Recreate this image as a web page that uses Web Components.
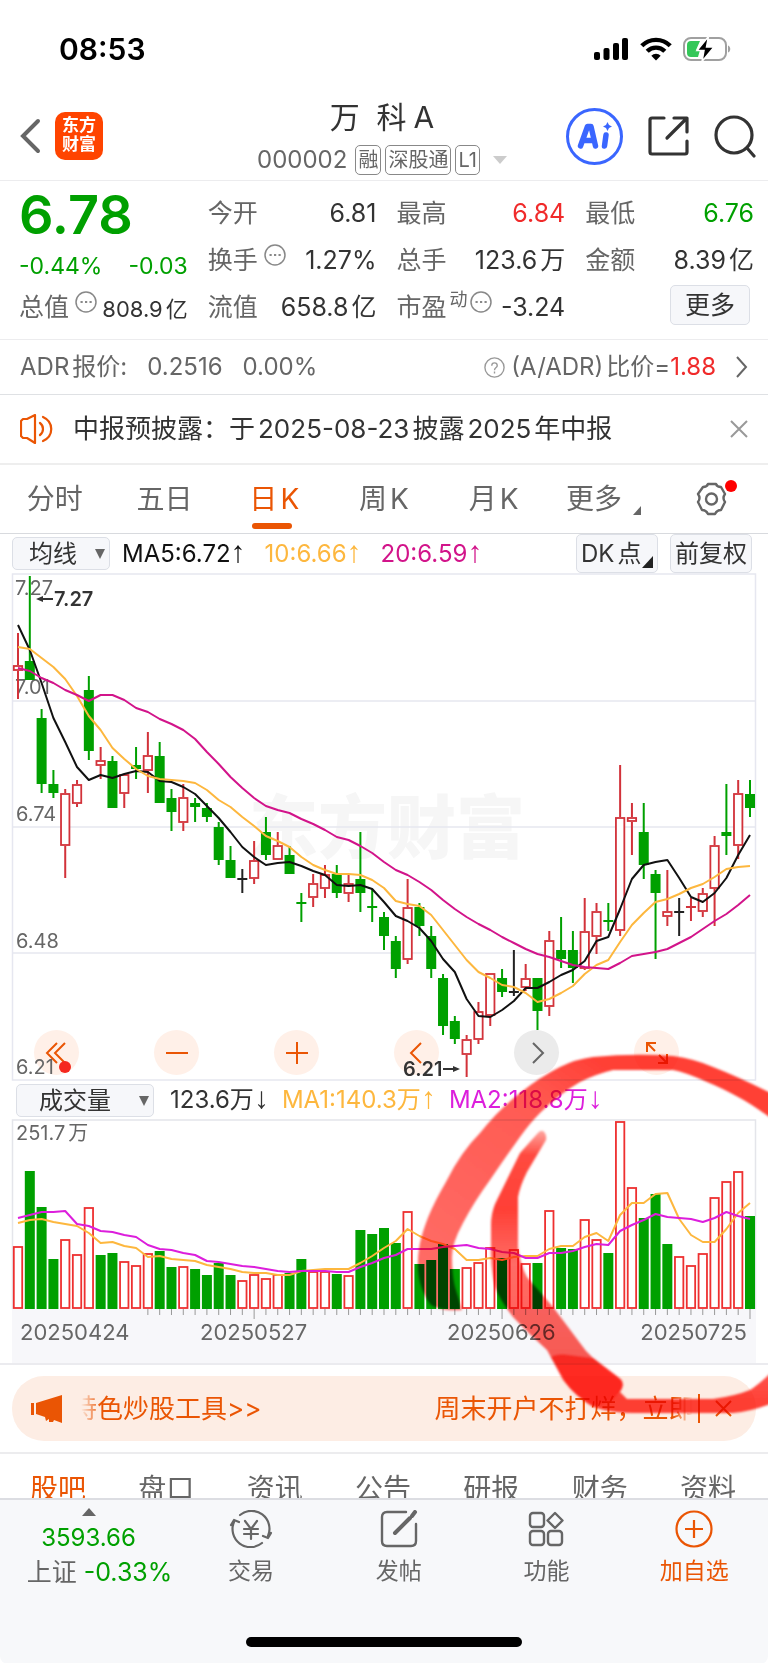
<!DOCTYPE html>
<html lang="zh-CN">
<head>
<meta charset="utf-8">
<meta name="viewport" content="width=device-width, initial-scale=1">
<title>万科A 000002</title>
<style>
body{margin:0;background:#fff;color:#333;font-family:Inter,"Noto Sans CJK SC",sans-serif;font-size:24px;line-height:32px;
--green:#00a000;--red:#f02a2a;--brand:#ea5504;--muted:#666;--line:#ececee;--panel:#f7f8fa}
</style>
</head>
<body>
<stock-app></stock-app>
<script>
/* .g separates Latin digits and letters from the Chinese characters beside them. */
const RESET = `*{box-sizing:border-box}:host{display:block}svg{display:block;flex:none}
button,select,a{font:inherit;color:inherit;text-decoration:none;border:0;background:none;padding:0;margin:0}
button,a{display:block}.g{margin-left:3px}`;
function define(name, css, html, ready) {
  const t = document.createElement('template');
  t.innerHTML = `<style>${RESET}${css}</style>${html}`;
  customElements.define(name, class extends HTMLElement {
    constructor() { super(); this.attachShadow({ mode: 'open' }).append(t.content.cloneNode(true)); }
    connectedCallback() { if (ready) ready(this, this.shadowRoot); }
  });
}

define('status-bar', `
:host{display:flex;align-items:center;justify-content:space-between;height:96px;padding:2px 36px 0 59px;color:#000}
time{font-size:30px;font-weight:600}
.i{display:flex;align-items:center;gap:11px}`, `
<time>08:53</time>
<div class="i">
<svg width="35" height="24"><g><rect x="0" y="15" width="6" height="8" rx="2"/><rect x="9.500" y="11" width="6" height="12" rx="2"/><rect x="19" y="6" width="6" height="17" rx="2"/><rect x="28" y="1" width="6" height="22" rx="2"/></g></svg>
<svg width="32" height="24" viewBox="0 0 32 24" fill="none" stroke="#000" stroke-width="4.400"><path d="M1.800 8.800a20 20 0 0 1 28.400 0"/><path d="M7.200 14.300a12.400 12.400 0 0 1 17.600 0"/><path d="M16 23.500l-4.700-4.800a6.700 6.700 0 0 1 9.400 0z" fill="#000" stroke="none"/></svg>
<svg width="49" height="26" viewBox="0 0 49 26"><rect x="1" y="2" width="42" height="22" rx="7" fill="none" stroke="#a0a0a0" stroke-width="2"/><path d="M8 5h9l-4 9h4l-2 7H8a4 4 0 0 1-4-4V9a4 4 0 0 1 4-4z" fill="#34c759"/><path d="M45 9.500c3 1 3 6 0 7z" fill="#a0a0a0"/><path d="M25.500.500L14 14.500h7L19 25.500 31 11h-7.500z" stroke="#fff" stroke-width="1.500"/></svg>
</div>`);

define('stock-header', `
:host{display:grid;grid-template-columns:1fr auto 1fr;align-items:center;height:85px;padding:0 12px 4px;border-bottom:1px solid var(--line)}
.l,.r,.s{display:flex;align-items:center}.l{gap:14px;padding-left:8px}
.r{justify-content:flex-end;gap:25px}
.logo{width:48px;height:48px;border-radius:10px;background:#ff4400;color:#fff;font-weight:700;font-size:17px;line-height:19px;text-align:center;padding:4px 6px}
.c{text-align:center;margin-right:4px}
h1{font-size:30px;line-height:38px;font-weight:400;margin:0;white-space:pre}
h1 b{font-weight:400;padding-left:7px}
.s{color:var(--muted);gap:4px;line-height:30px;margin-top:9px}
.s i{font-style:normal;font-size:20px;line-height:28px;border:1px solid #888;border-radius:5px;padding:0 2px}
.s span{padding-right:4px}.s svg{margin-left:9px}
.ai{display:grid;place-items:center;width:57px;height:57px;border:3px solid #3a66ff;border-radius:50%}`, `
<div class="l"><button aria-label="返回"><svg width="21" height="36" fill="none" stroke="#666" stroke-width="4" stroke-linecap="round"><path d="M18 3L3 18l15 15"/></svg></button><div class="logo">东方<br>财富</div></div>
<div class="c"><h1>万  科<b>A</b></h1><div class="s"><span>000002</span><i>融</i><i>深股通</i><i>L1</i><svg width="14" height="8"><path d="M0 0h14l-7 8z" fill="#ccc"/></svg></div></div>
<div class="r"><button class="ai" aria-label="AI"><svg width="36" height="30" viewBox="0 0 36 30" fill="none" stroke="#3a66ff" stroke-linejoin="round" stroke-linecap="round"><path d="M3.500 25L10.500 5.500h3.500L18.500 25M8 19.500h8" stroke-width="5.500"/><path d="M29 14l-1.500 11" stroke-width="5.500"/><path d="M30.500 1l1.500 3 3 1.500-3 1.500-1.500 3-1.500-3-3-1.500 3-1.500z" fill="#3a66ff" stroke="none"/></svg></button>
<button aria-label="分享"><svg width="41" height="42" fill="none" stroke="#333" stroke-width="3.200" stroke-linecap="round" stroke-linejoin="round"><path d="M16 3H4q-2 0-2 2v32q0 2 2 2h33q2 0 2-2V26M19 23L38 4M26 3h13v14"/></svg></button>
<button aria-label="搜索"><svg width="42" height="43" fill="none" stroke="#333" stroke-width="3.200" stroke-linecap="round"><circle cx="20" cy="20" r="18"/><path d="M33 33l7 8"/></svg></button></div>`);

define('quote-cell', `
:host{display:flex;justify-content:space-between;align-items:center;white-space:nowrap;color:#333;min-width:0}
.k{display:flex;align-items:center;color:var(--muted);font-size:25px}
.v{font-size:25px}
sup{font-size:18px;line-height:18px;align-self:flex-start;margin-left:3px}
svg{align-self:flex-start;margin-left:6px}sup+svg{margin-left:2px}
:host([tone=red]){color:var(--red)}:host([tone=green]){color:var(--green)}
:host([small]) .v{font-size:22px;padding-top:4px}
::slotted(b){font-weight:400;margin-left:3px}`, `<span class="k"></span><span class="v"><slot></slot></span>`, (el, root) => {
  const info = '<svg width="22" height="22" fill="none" stroke="#888" stroke-width="1.500"><circle cx="11" cy="11" r="10"/><path d="M5.500 11h2.200M10 11h2.200M14.500 11h2.200" stroke-width="2.200"/></svg>';
  root.querySelector('.k').innerHTML = el.getAttribute('label') + (el.hasAttribute('sup') ? `<sup>${el.getAttribute('sup')}</sup>` : '') + (el.hasAttribute('info') ? info : '');
});

define('quote-panel', `
:host{display:grid;grid-template-columns:repeat(4,minmax(0,1fr));grid-auto-rows:47px;column-gap:20px;padding:8px 14px 9px 19px;border-bottom:1px solid var(--line)}
:host>*{align-self:center}
.p{color:var(--green);font-size:54px;font-weight:600;line-height:54px;padding-top:5px}
.d{display:flex;justify-content:space-between;color:var(--green);padding-top:12px;font-size:23px}
button{justify-self:end;width:80px;height:40px;margin:0 4px 4px 0;border:1px solid #dcdfe6;border-radius:5px;background:#f6f7fa;font-size:25px}`, `
<div class="p">6.78</div><quote-cell label="今开">6.81</quote-cell><quote-cell label="最高" tone="red">6.84</quote-cell><quote-cell label="最低" tone="green">6.76</quote-cell>
<div class="d"><span>-0.44%</span><span>-0.03</span></div><quote-cell label="换手" info>1.27%</quote-cell><quote-cell label="总手">123.6<b>万</b></quote-cell><quote-cell label="金额">8.39<b>亿</b></quote-cell>
<quote-cell label="总值" info small>808.9<b>亿</b></quote-cell><quote-cell label="流值">658.8<b>亿</b></quote-cell><quote-cell label="市盈" sup="动" info>-3.24</quote-cell><button>更多</button>`);

define('adr-row', `
:host{display:flex;align-items:center;justify-content:space-between;height:55px;padding:0 20px;border-bottom:1px solid #dfe1e4;color:var(--muted)}
div,a{display:flex;align-items:center}div{gap:20px}b{font-weight:400;color:var(--red)}
a svg:first-child{margin-right:6px}a svg:last-child{margin-left:20px}`, `
<div><span>ADR<span class="g">报价:</span></span><span>0.2516</span><span>0.00%</span></div>
<a href="#adr"><svg width="21" height="23" viewBox="0 0 23 23" fill="none" stroke="#999" stroke-width="1.500"><circle cx="11.500" cy="11.500" r="10.500"/><path d="M8.500 9.500c0-4 6-4 6 0 0 2-3 2-3 5M11.500 16v2"/></svg>(A/ADR)<span class="g">比价=</span><b>1.88</b><svg width="12" height="22" fill="none" stroke="#666" stroke-width="2"><path d="M1 1l9 10-9 10"/></svg></a>`);

define('notice-bar', `
:host{display:flex;align-items:center;height:70px;padding:0 20px;border-bottom:2px solid #eee;font-size:26px}
p{flex:1;margin:0 0 0 20px;white-space:nowrap}`, `
<svg width="33" height="30" fill="none" stroke="#ea5504" stroke-width="2.200" stroke-linejoin="round" stroke-linecap="round"><path d="M1 7l2-2h4l8-4v28l-8-5H3l-2-2zM20 9c4 3 4 9 0 12M23 3c11 5 11 19 0 24"/></svg>
<p>中报预披露：于<span class="g">2025-08-23</span><span class="g">披露</span><span class="g">2025</span><span class="g">年中报</span></p>
<button aria-label="关闭"><svg width="18" height="18" stroke="#999" stroke-width="2"><path d="M1 1l16 16M17 1L1 17"/></svg></button>`);

define('period-tabs', `
:host{display:grid;grid-template-columns:repeat(7,1fr);align-items:center;justify-items:center;height:69px;border-bottom:1px solid #d8dade;font-size:28px;color:var(--muted)}
a,button{position:relative;white-space:nowrap}
.on{color:var(--brand)}
.on::after{content:"";position:absolute;left:3px;bottom:-14px;width:40px;height:6px;border-radius:3px;background:var(--brand)}
.m{display:flex;align-items:flex-end;gap:11px}`, `
<a href="#fs">分时</a><a href="#d5">五日</a><a href="#dk" class="on">日<span class="g">K</span></a><a href="#wk">周<span class="g">K</span></a><a href="#mk">月<span class="g">K</span></a>
<button class="m">更多<svg width="8" height="9"><path d="M8 0v9H0z" fill="#666"/></svg></button>
<button aria-label="设置"><svg width="48" height="40" viewBox="-2 0 48 40"><g fill="none" stroke="#666" stroke-width="2.400" stroke-linejoin="round"><path d="M12 8q4 0 5-3h8q1 3 5 3l4 7q-3 4 0 8l-4 8q-4 0-6 4h-7q-2-4-6-4l-4-8q3-4 0-8z"/><circle cx="20.500" cy="20" r="5.500"/></g><circle cx="40" cy="7" r="6" fill="#f00"/></svg></button>`);

define('indicator-select', `
:host{display:block;position:relative;width:var(--w)}
select{appearance:none;display:block;width:100%;height:33px;padding-left:var(--pad);border:1px solid #dcdfe6;border-radius:5px;background:#f6f7fa;color:#333;line-height:31px;font-size:24px}
svg{position:absolute;right:5px;top:12px;pointer-events:none}`, `<select></select><svg width="10" height="10"><path d="M0 0h10L5 10z" fill="#666"/></svg>`, (el, root) => {
  const s = root.querySelector('select');
  s.setAttribute('aria-label', el.getAttribute('label'));
  s.innerHTML = `<option>${el.getAttribute('label')}</option>`;
});

const ARROW = 'u{font-family:"Liberation Sans",Inter,sans-serif;text-decoration:none;font-size:30px;line-height:24px}span{white-space:nowrap}';
define('average-bar', `${ARROW}
:host{display:flex;align-items:center;height:39px;padding:0 16px 0 12px}
indicator-select{--w:98px;--pad:16px;margin-right:12px}
.v{display:flex;gap:19px;flex:1}
button{height:39px;border:1px solid #dcdfe6;border-radius:5px;background:#f6f7fa;margin-left:12px;padding:0 4px;position:relative;white-space:nowrap}
.dk{width:82px;text-align:left}.dk svg{position:absolute;right:4px;bottom:4px}`, `
<indicator-select label="均线"></indicator-select>
<div class="v"><span style="color:#111">MA5:6.72<u>↑</u></span><span style="color:#fdb73e">10:6.66<u>↑</u></span><span style="color:#d2148a">20:6.59<u>↑</u></span></div>
<button class="dk">DK<span class="g">点</span><svg width="11" height="12"><path d="M11 0v12H0z" fill="#222"/></svg></button><button>前复权</button>`);

define('volume-bar', `${ARROW}
:host{display:flex;align-items:center;gap:13px;height:38px;padding:0 16px}
indicator-select{--w:138px;--pad:22px;margin-right:3px}`, `
<indicator-select label="成交量"></indicator-select>
<span>123.6万<u>↓</u></span><span style="color:#fdb73e">MA1:140.3万<u>↑</u></span><span style="color:#dc1edc">MA2:118.8万<u>↓</u></span>`);

/* One row per session: high, body top, body bottom, low, colour (r up, g down, k flat), volume bar top. */
const DATA = `633 665 671 699 r 1246|576 661 680 680 g 1171|709 718 784 793 g 1207|770 784 793 798 g 1259|789 793 846 878 r 1239|780 784 804 807 r 1254|676 690 751 760 g 1207r|747 760 766 779 r 1255g|756 761 808 808 g 1253|774 774 794 808 r 1261|747 765 769 779 g 1265r|732 755 771 793 r 1253|742 756 803 803 g 1251|789 798 812 831 g 1267|784 797 823 831 r 1266|798 803 807 822 g 1269|803 808 817 822 g 1275|822 827 860 865 g 1263|846 860 878 878 g 1275|869 879 879 893 k 1280|841 860 879 884 r 1274|817 832 855 860 g 1278r|832 845 860 860 r 1274|846 855 874 874 g 1273|893 903 903 922 g 1259|874 883 898 907 r 1271|865 874 889 898 r 1271|865 874 893 898 g 1274|874 883 894 902 r 1275|832 879 893 912 g 1230|889 907 907 922 g 1234|912 917 936 950 g 1228|936 941 969 978 g 1243|879 907 960 964 r 1211|903 907 926 936 g 1264|926 936 969 978 g 1260|974 978 1026 1035 g 1244|1016 1021 1039 1044 g 1269|1035 1039 1055 1077 r 1267|1002 1011 1040 1044 r 1262|973 973 1016 1026 r 1247|969 978 992 997 g 1258|950 992 992 996 k 1249|964 978 988 991 r 1263|978 978 1011 1030 g 1263|931 940 1007 1016 r 1210|917 950 959 968 g 1248|931 950 968 983 g 1249|898 931 969 970 r 1219|903 911 937 954 r 1239|903 921 921 931 g 1253|765 817 931 936 r 1121|803 817 822 855 r 1187|803 832 865 879 g 1218|870 874 893 959 g 1194|870 911 917 926 r 1244g|898 912 912 936 k 1256|898 907 907 921 r 1265|888 893 912 917 r 1253|836 845 889 926 r 1197|784 832 836 855 g 1181r|780 793 846 859 r 1171|780 794 808 817 g 1216`.split('|').map(r => r.split(' '));
const MA5 = [625,650,683,718,742,767,780,775,778,774,771,772,781,782,787,794,806,818,832,847,857,865,863,862,866,871,875,885,886,885,889,902,916,921,928,941,959,972,999,1016,1017,1010,1001,988,988,982,975,970,961,941,937,909,879,865,862,860,878,897,902,893,878,855,835];
const MA10 = [647,649,658,667,679,696,716,730,748,759,769,776,779,780,781,783,790,800,807,817,826,836,841,847,857,865,870,874,874,875,880,888,901,904,906,915,930,945,960,972,978,985,987,993,1002,999,993,986,974,965,960,942,925,913,902,899,894,888,884,877,869,867,866];
const MA20 = [668,671,678,683,690,695,701,695,695,700,708,712,719,724,730,739,752,764,777,788,798,806,810,813,819,824,830,837,840,846,853,862,870,875,882,890,900,909,917,924,930,937,943,949,954,957,961,965,967,968,969,963,956,954,952,949,943,937,929,921,914,905,895];
const V1 = [1223,1220,1219,1222,1224,1226,1233,1243,1242,1246,1248,1257,1256,1259,1260,1261,1265,1267,1269,1272,1273,1273,1275,1275,1271,1270,1269,1269,1269,1263,1256,1248,1241,1229,1236,1241,1244,1249,1260,1260,1258,1260,1257,1256,1256,1249,1246,1246,1237,1233,1241,1215,1203,1203,1194,1193,1219,1235,1242,1242,1229,1213,1203];
const V2 = [1218,1215,1212,1212,1211,1224,1226,1231,1232,1235,1237,1245,1249,1250,1253,1255,1261,1262,1264,1266,1267,1269,1271,1272,1271,1271,1271,1272,1272,1267,1263,1258,1255,1249,1249,1249,1247,1246,1245,1248,1249,1252,1253,1258,1258,1253,1253,1251,1247,1244,1245,1231,1225,1220,1214,1217,1218,1219,1222,1218,1212,1216,1219];
const xAt = i => 18 + i * 732 / 62;
const line = (a, c) => `<polyline fill="none" stroke="${c}" stroke-width="2" stroke-linejoin="round" points="${a.map((y, i) => xAt(i).toFixed(1) + ',' + y).join(' ')}"/>`;
const COLORS = { r: '#d2323a', g: '#00a000', k: '#222' };

define('candle-chart', `
:host{display:block;position:relative}
svg.c{width:100%;height:auto;position:relative;pointer-events:none}
svg.bg{width:100%;height:auto;position:absolute;left:0;top:0}
.b{position:absolute;left:34px;right:89px;bottom:6px;display:flex;justify-content:space-between}
button{width:45px;height:45px;border-radius:50%;background:#fff0e8;display:grid;place-items:center}
button.n{background:#ebebeb}
text{font-family:Inter,"Noto Sans CJK SC",sans-serif}`, `
<svg class="bg" viewBox="0 573 768 508"><text x="249" y="853" font-size="69" font-weight="900" fill="#f6f6f6">东方财富</text></svg>
<div class="b"></div><svg class="c" viewBox="0 573 768 508"></svg>`, (el, root) => {
  const icon = (label, d, cls = '') => `<button aria-label="${label}" class="${cls}"><svg width="28" height="28" fill="none" stroke="${cls ? '#666' : '#ea5504'}" stroke-width="2"><path d="${d}"/></svg></button>`;
  root.querySelector('.b').innerHTML = icon('最早', 'M14 4L4 14l10 10M22 4L12 14l10 10') + icon('缩小', 'M3 14h22') + icon('放大', 'M3 14h22M14 3v22') + icon('左移', 'M18 4L8 14l10 10') + icon('右移', 'M10 4l10 10-10 10', 'n') + icon('全屏', 'M4 13V4h9M4 4l8 8M24 15v9h-9M24 24l-8-8');
  let s = '<g stroke="#e6e7f0" stroke-width="1.500" fill="none"><path d="M12.500 574H755.500V1080H12.500zM13 701H755M13 827H755M13 953H755"/></g>';
  s += '<g font-size="20" fill="#666"><text x="15" y="595">7.27</text><text x="15" y="694">7.01</text><text x="16" y="821">6.74</text><text x="16" y="948">6.48</text><text x="16" y="1074">6.21</text></g>';
  DATA.forEach(([h, t, b, l, c], i) => {
    const x = xAt(i), k = COLORS[c];
    h = +h; t = +t; b = +b; l = +l;
    if (t === b) s += `<path d="M${x} ${h}V${l}M${x - 5} ${t}h10" stroke="${k}" stroke-width="2"/>`;
    else s += `<path d="M${x} ${h}V${t}M${x} ${b}V${l}" stroke="${k}" stroke-width="2"/>` + (c === 'r'
      ? `<rect x="${x - 4.2}" y="${t + 1}" width="8.400" height="${Math.max(b - t - 2, 2)}" fill="#fff" stroke="${k}" stroke-width="1.800"/>`
      : `<rect x="${x - 5}" y="${t}" width="10" height="${b - t}" fill="${k}"/>`);
  });
  s += line(MA5, '#111') + line(MA10, '#fdb73e') + line(MA20, '#d2148a');
  s += '<g fill="#333" stroke="#333"><path d="M42 599h11M443 1069h11" stroke-width="2"/><path d="M36 599l7-3v6zM460 1069l-7-3v6z" stroke="none"/></g>';
  s += '<g font-size="20" font-weight="600" fill="#333"><text x="54" y="606">7.27</text><text x="403" y="1076">6.21</text></g><circle cx="65" cy="1067" r="6" fill="#f5281e"/>';
  root.querySelector('.c').innerHTML = s;
});

define('volume-chart', `svg{width:100%;height:auto}:host{border-bottom:2px solid #ebebef}
text{font-family:Inter,"Noto Sans CJK SC",sans-serif;fill:#666}`, `<svg viewBox="0 1119 768 244"></svg>`, (el, root) => {
  let s = '<rect x="12" y="1309" width="744" height="54" fill="#f7f7fa"/><path d="M12.500 1309V1120H755.500V1309" fill="none" stroke="#e4e5ea" stroke-width="1.500"/><text x="16" y="1140" font-size="20">251.7<tspan dx="3">万</tspan></text>';
  DATA.forEach(([, , , , c, v], i) => {
    const x = xAt(i), y = parseInt(v), up = v.endsWith('r') || (c !== 'g' && !v.endsWith('g'));
    s += up ? `<rect x="${x - 4.2}" y="${y + 1}" width="8.400" height="${1307 - y}" fill="#fff" stroke="#ee3030" stroke-width="1.800"/>`
      : `<rect x="${x - 5}" y="${y}" width="10" height="${1309 - y}" fill="#00a000"/>`;
    if (i > 10) s += `<path d="M${x} 1309V${[20, 41, 62].includes(i) ? 1319 : 1315}" stroke="#999"/>`;
  });
  s += line(V1, '#fdb73e') + line(V2, '#dc1edc');
  s += '<g font-size="22"><text x="20" y="1340">20250424</text><text x="200" y="1340">20250527</text><text x="447" y="1340">20250626</text><text x="747" y="1340" text-anchor="end">20250725</text></g>';
  root.querySelector('svg').innerHTML = s;
});

/* Hand-drawn marker circle laid over the volume area. */
define('marker-ink', `
:host{position:absolute;left:0;right:0;top:506px;pointer-events:none;mix-blend-mode:multiply}
svg{width:100%;height:auto}`, `
<svg viewBox="0 1040 768 400"><defs><linearGradient id="a" gradientUnits="userSpaceOnUse" x1="430" y1="1300" x2="600" y2="1060"><stop offset="0" stop-color="#ff6e68"/><stop offset=".75" stop-color="#ff5a52"/><stop offset="1" stop-color="#ff3f35"/></linearGradient>
<linearGradient id="b" gradientUnits="userSpaceOnUse" x1="0" y1="1128" x2="0" y2="1400"><stop offset="0" stop-color="#ffb0aa"/><stop offset=".1" stop-color="#ff4a40"/><stop offset=".3" stop-color="#ff4036"/><stop offset=".5" stop-color="#ff6c66"/><stop offset=".85" stop-color="#ff5c56"/><stop offset="1" stop-color="#ff4238"/></linearGradient>
<filter id="f" x="-5%" y="-5%" width="110%" height="110%"><feGaussianBlur stdDeviation="1"/></filter></defs>
<g filter="url(#f)"><path fill="url(#a)" d="M462 1310C448 1311 438 1309 431 1305C419 1290 415 1268 420 1243C427 1215 436 1200 447 1180Q461 1152 480 1133Q498 1110 520 1093Q540 1077 560 1067Q576 1059 593 1057Q635 1053 673 1056Q695 1059 713 1067Q744 1079 780 1098V1125Q755 1106 740 1098Q722 1088 707 1082Q685 1072 673 1070H613Q596 1074 580 1082Q559 1094 540 1113Q530 1123 520 1137Q505 1158 490 1180Q474 1202 463 1223Q452 1243 452 1257Q452 1275 455 1287Q459 1300 462 1310z"/>
<path fill="url(#b)" d="M543 1131Q547 1134 546 1140L527 1172Q520 1186 518 1197V1247Q520 1264 527 1277L553 1307L580 1343Q586 1352 593 1358L620 1380Q625 1385 620 1392L627 1399H713Q735 1396 750 1390Q761 1383 780 1364V1400Q755 1411 733 1413H633Q612 1413 593 1407Q576 1397 563 1380L547 1350Q529 1334 513 1317Q500 1300 495 1287Q490 1266 491 1247V1225Q491 1214 495 1204L520 1153L537 1134Q540 1130 543 1131z"/>
<path fill="#ff2a22" d="M551 1357Q557 1353 570 1355L593 1358L618 1377Q625 1382 622 1388L613 1400L595 1406Q576 1397 566 1383z"/></g></svg>`);

define('promo-banner', `
:host{display:flex;align-items:center;height:65px;margin:11px 12px;padding:0 24px 0 19px;border-radius:32px;background:#fdede4;color:var(--brand);font-size:26px}
.t{flex:1;overflow:hidden;margin:0 5px 0 18px;-webkit-mask:linear-gradient(90deg,transparent,#000 20px,#000 calc(100% - 20px),transparent)}
a{display:flex;gap:173px;white-space:nowrap;margin-left:-10px}
i{width:2px;height:29px;background:var(--brand);margin-right:15px}`, `
<svg width="32" height="28" fill="#ea5504"><path d="M0 8h3v12H0zM5 8L31 0v28l-8-3-1 2h-4v-3l-3 2-1-4-9-3z"/></svg>
<div class="t"><a href="#promo"><span>特色炒股工具&gt;&gt;</span><span>周末开户不打烊，立即</span></a></div><i></i>
<button aria-label="关闭"><svg width="17" height="17" stroke="#ea5504" stroke-width="2"><path d="M1 1l15 15M16 1L1 16"/></svg></button>`);

define('info-tabs', `
:host{display:flex;justify-content:space-between;height:46px;overflow:hidden;padding:15px 32px 0 30px;border-top:2px solid var(--line);font-size:28px;line-height:40px;color:var(--muted)}
.on{color:var(--brand)}`, `<a href="#guba" class="on">股吧</a><a href="#pankou">盘口</a><a href="#news">资讯</a><a href="#notice">公告</a><a href="#report">研报</a><a href="#finance">财务</a><a href="#info">资料</a>`);

define('bottom-bar', `
:host{background:var(--panel);border-top:2px solid #dcdde2;border-radius:0 0 8px 8px;padding:8px 0 17px}
nav{display:grid;grid-template-columns:177px repeat(4,1fr)}
a,.x{display:flex;flex-direction:column;align-items:center;color:var(--muted);font-size:23px}
a svg{margin:2px 0 7px}.x{font-size:25px;line-height:34px;padding-left:22px;white-space:nowrap}
.x svg{margin-right:22px}.x b{font-weight:400;font-size:24px;color:var(--green);margin:5px 22px 0 0}.x span{color:var(--green)}
.add{color:var(--brand)}
.h{width:36%;height:10px;border-radius:5px;background:#000;margin:48px auto 0}`, `
<nav><button class="x"><svg width="14" height="8"><path d="M0 8h14L7 0z" fill="#666"/></svg><b>3593.66</b><div>上证 <span>-0.33%</span></div></button>
<a href="#trade"><svg width="44" height="38" viewBox="0 0 44 38" fill="none" stroke="#666" stroke-width="2.200" stroke-linecap="round" stroke-linejoin="round"><path d="M11 5a18 18 0 0 1 28 21M42 23l-3 5-5-2M33 33A18 18 0 0 1 5 12M2 15l3-5 5 2M16 11l6 8 6-8M22 19v10M15 19h14M15 24h14"/></svg>交易</a>
<a href="#post"><svg width="38" height="38" fill="none" stroke="#666" stroke-width="2.400" stroke-linecap="round" stroke-linejoin="round"><path d="M26 2H7Q2 2 2 7v24q0 5 5 5h24q5 0 5-5V14"/><path d="M15 23L30 8M32 6l3-4" stroke-width="4"/></svg>发帖</a>
<a href="#func"><svg width="36" height="38" fill="none" stroke="#666" stroke-width="2.400"><rect x="2" y="3" width="14" height="14" rx="3"/><rect x="2" y="21" width="14" height="14" rx="3"/><rect x="20" y="21" width="14" height="14" rx="3"/><path d="M27 3l7.500 7.500L27 18l-7.500-7.500z" stroke-linejoin="round"/></svg>功能</a>
<a href="#add" class="add"><svg width="38" height="38" fill="none" stroke="#ea5504" stroke-width="2.200"><circle cx="19" cy="19" r="17.500"/><path d="M10 19h18M19 10v18"/></svg>加自选</a></nav><div class="h"></div>`);

define('stock-app', `.k{position:relative;overflow:hidden}`, `
<status-bar></status-bar><stock-header></stock-header><quote-panel></quote-panel><adr-row></adr-row><notice-bar></notice-bar><period-tabs></period-tabs>
<main class="k"><average-bar></average-bar><candle-chart></candle-chart><volume-bar></volume-bar><volume-chart></volume-chart><promo-banner></promo-banner>
<marker-ink></marker-ink></main>
<info-tabs></info-tabs><bottom-bar></bottom-bar>`);
</script>
</body>
</html>
